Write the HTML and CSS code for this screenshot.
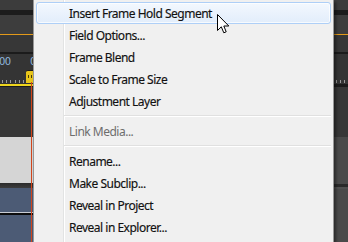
FILE: index.html
```html
<!DOCTYPE html>
<html lang="en">
<head>
  <meta charset="UTF-8">
  <meta name="viewport" content="width=device-width, initial-scale=1.0">
  <title>Timeline context menu</title>
  <link rel="stylesheet" href="styles.css">
</head>
<body>
  <div class="screen">
    <div class="track-side left">
      <div class="row tab-bar"></div>
      <div class="row tab-edge"></div>
      <div class="row header"></div>
      <div class="row orange-line"></div>
      <div class="row header-lower"></div>
      <div class="row dark-line"></div>
      <div class="row ruler">
        <span class="ruler-num first">00</span>
        <span class="ruler-num second">0</span>
        <div class="ticks"></div>
        <div class="playhead"><i></i><i></i></div>
      </div>
      <div class="row work-area"></div>
      <div class="row dark-line thin"></div>
      <div class="row empty"></div>
      <div class="row track-light"></div>
      <div class="row track-split"></div>
      <div class="row track-clip"></div>
      <div class="row clip-edge"></div>
      <div class="row track-clip fill"></div>
      <div class="cti-line"></div>
    </div>

    <div class="menu">
      <div class="menu-item active">Insert Frame Hold Segment</div>
      <div class="menu-item">Field Options...</div>
      <div class="menu-item">Frame Blend</div>
      <div class="menu-item">Scale to Frame Size</div>
      <div class="menu-item">Adjustment Layer</div>
      <div class="menu-sep"></div>
      <div class="menu-item disabled">Link Media...</div>
      <div class="menu-sep"></div>
      <div class="menu-item">Rename...</div>
      <div class="menu-item">Make Subclip...</div>
      <div class="menu-item">Reveal in Project</div>
      <div class="menu-item">Reveal in Explorer...</div>

      <svg class="cursor" width="14" height="21" viewBox="0 0 14 21">
        <path d="M0.5 0.5 L0.5 16.5 L4.3 12.8 L6.8 18.8 L9.2 17.8 L6.8 12 L11.8 12 Z" fill="#fff" stroke="#000" stroke-width="1" stroke-linejoin="miter"/>
      </svg>
    </div>

    <div class="track-side right">
      <div class="row tab-bar"></div>
      <div class="row tab-edge"></div>
      <div class="row header"></div>
      <div class="row orange-line"></div>
      <div class="row header-lower"></div>
      <div class="row dark-line"></div>
      <div class="row ruler"><div class="ticks"></div></div>
      <div class="row dark-line work"></div>
      <div class="row empty"></div>
      <div class="row track-grey"></div>
      <div class="row track-split"></div>
      <div class="row track-grey fill"></div>
    </div>
  </div>
</body>
</html>
```

FILE: styles.css
```css
body {
  margin: 0;
  background-color: #363636;
  font-family: 'Noto Sans', 'Open Sans', sans-serif;
  overflow: hidden;
}
.screen {
  display: flex;
  width: 348px;
  height: 242px;
  overflow: hidden;
}

/* timeline strips left and right of the menu */
.track-side {
  position: relative;
  display: flex;
  flex-direction: column;
  height: 242px;
  overflow: hidden;
}
.track-side.left {
  width: 33px;
}
.track-side.right {
  flex: 1;
}
.row {
  position: relative;
  flex: none;
}
.tab-bar {
  height: 10px;
  background-color: #3c3c3c;
}
.tab-edge {
  height: 5px;
  background-color: #1c1c1c;
}
.header {
  height: 19px;
  background-color: #3d3d3d;
}
.orange-line {
  height: 1px;
  background-color: #e39a1a;
}
.header-lower {
  height: 17px;
  background-color: #373737;
}
.dark-line {
  height: 2px;
  background-color: #1b1b1b;
}
.dark-line.thin {
  height: 1px;
}
.dark-line.work {
  height: 3px;
}
.ruler {
  height: 30px;
  background-color: #343434;
}
.ruler-num {
  position: absolute;
  top: 2px;
  font-family: 'DejaVu Sans', sans-serif;
  font-size: 10px;
  color: #8fb6dc;
  letter-spacing: -0.5px;
}
.ruler-num.first {
  left: -1px;
}
.ruler-num.second {
  left: 30px;
}
.ticks {
  position: absolute;
  left: 2px;
  right: 0;
  top: 26px;
  height: 3px;
  background: repeating-linear-gradient(90deg, #9a9a9a 0, #9a9a9a 1px, transparent 1px, transparent 4.2px);
}
.playhead {
  position: absolute;
  left: 26px;
  top: 16px;
  width: 11px;
  height: 12px;
  background-color: #e8c51b;
  border-top: 1px solid #1a1a1a;
  border-radius: 2px 2px 0 0;
}
.playhead i {
  position: absolute;
  top: 4px;
  width: 1px;
  height: 3px;
  background-color: #4a3c05;
}
.playhead i:first-child {
  left: 2px;
}
.playhead i:last-child {
  left: 5px;
}
.work-area {
  height: 2px;
  background-color: #eed51e;
}
.empty {
  height: 50px;
  background-color: #373737;
}
.track-light {
  height: 46px;
  background-color: #d5d5d5;
}
.track-grey {
  height: 47px;
  background-color: #4a4a4a;
}
.track-split {
  height: 3px;
  background-color: #2a2a2a;
  border-bottom: 2px solid #505050;
}
.track-side.left .track-split {
  height: 5px;
  border-bottom: 0;
  background: linear-gradient(#2b2b2b, #3d3d3d);
}
.track-clip {
  height: 24px;
  background-color: #4c5b75;
}
.clip-edge {
  height: 2px;
  background-color: #0d0d0d;
  border-top: 1px solid #c8ccd4;
}
.fill {
  flex: 1;
}
.cti-line {
  position: absolute;
  left: 31px;
  top: 82px;
  bottom: 0;
  width: 1px;
  background-color: #d3461c;
}

/* context menu */
.menu {
  position: relative;
  width: 295px;
  flex: none;
  padding: 2px 2px 0;
  background-color: #f0f0f0;
  border-left: 1px solid #979797;
  border-right: 1px solid #979797;
  box-shadow: 2px 2px 3px rgba(0, 0, 0, 0.45);
  background-image: linear-gradient(90deg, transparent 29px, #e2e3e3 29px, #e2e3e3 30px, #ffffff 30px, #ffffff 31px, transparent 31px);
  z-index: 1;
}
.menu-item {
  height: 22px;
  line-height: 21px;
  padding-left: 32px;
  font-size: 12px;
  letter-spacing: -0.5px;
  color: #111;
  box-sizing: border-box;
  border: 1px solid transparent;
  border-radius: 3px;
  white-space: nowrap;
  -webkit-text-stroke: 0.15px #111;
}
.menu-item.active {
  border-color: #aecff7;
  background: linear-gradient(#f3f8fe, #e2edfb);
  box-shadow: inset 0 0 0 1px rgba(255, 255, 255, 0.7);
}
.menu-item.disabled {
  color: #6d6d6d;
  -webkit-text-stroke: 0;
}
.menu-sep {
  height: 8px;
  margin-left: 28px;
  background: linear-gradient(transparent 3px, #e0e0e0 3px, #e0e0e0 4px, #ffffff 4px, #ffffff 5px, transparent 5px);
}
.cursor {
  position: absolute;
  left: 183px;
  top: 14px;
}
```
